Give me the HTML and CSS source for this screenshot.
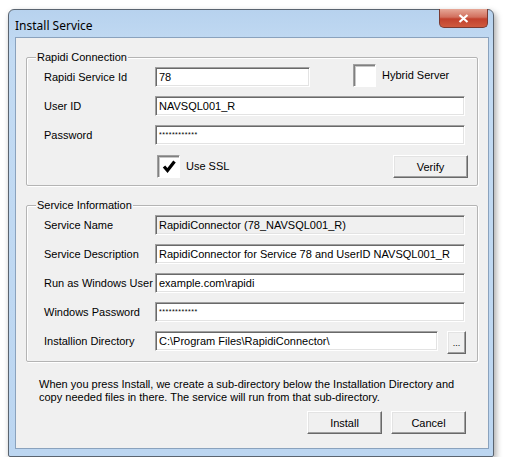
FILE: index.html
```html
<!DOCTYPE html>
<html lang="en">
<head>
  <meta charset="UTF-8">
  <title>Install Service</title>
  <link rel="stylesheet" href="styles.css">
</head>
<body>
  <div class="window">
    <div class="titlebar">
      <span class="title">Install Service</span>
      <div class="close">
        <svg width="11" height="9" viewBox="0 0 11 9"><path d="M1.5 1 L9.5 8 M9.5 1 L1.5 8" stroke="#fff" stroke-width="2.2" fill="none"/></svg>
      </div>
    </div>

    <div class="client">
      <fieldset class="group">
        <legend>Rapidi Connection</legend>
        <div class="row first">
          <label class="lbl">Rapidi Service Id</label>
          <div class="field short">78</div>
          <div class="check hybrid"></div>
          <span class="check-label">Hybrid Server</span>
        </div>
        <div class="row">
          <label class="lbl">User ID</label>
          <div class="field">NAVSQL001_R</div>
        </div>
        <div class="row">
          <label class="lbl">Password</label>
          <div class="field pw">************</div>
        </div>
        <div class="row tall">
          <span class="lbl"></span>
          <div class="check ssl">
            <svg width="18" height="18" viewBox="0 0 18 18"><path d="M4 8.5 L7.5 12.5 L14.5 3.5" stroke="#000" stroke-width="3.2" fill="none"/></svg>
          </div>
          <span class="check-label">Use SSL</span>
          <button class="btn verify">Verify</button>
        </div>
      </fieldset>

      <fieldset class="group second">
        <legend>Service Information</legend>
        <div class="row top">
          <label class="lbl">Service Name</label>
          <div class="field readonly">RapidiConnector (78_NAVSQL001_R)</div>
        </div>
        <div class="row">
          <label class="lbl">Service Description</label>
          <div class="field">RapidiConnector for Service 78 and UserID NAVSQL001_R</div>
        </div>
        <div class="row">
          <label class="lbl">Run as Windows User</label>
          <div class="field">example.com\rapidi</div>
        </div>
        <div class="row">
          <label class="lbl">Windows Password</label>
          <div class="field pw">************</div>
        </div>
        <div class="row dir">
          <label class="lbl">Installion Directory</label>
          <div class="field dirfield">C:\Program Files\RapidiConnector\</div>
          <button class="btn browse">...</button>
        </div>
      </fieldset>

      <p class="note">When you press Install, we create a sub-directory below the Installation Directory and<br>copy needed files in there. The service will run from that sub-directory.</p>

      <div class="actions">
        <button class="btn">Install</button>
        <button class="btn">Cancel</button>
      </div>
    </div>
  </div>
</body>
</html>
```

FILE: styles.css
```css
body{
  margin: 0;
  padding: 9px 0 0 8px;
  background: #fff;
  font-family: "Liberation Sans", Arial, sans-serif;
  font-size: 11px;
  color: #000;
}

.window{
  width: 484px;
  height: 446px;
  border: 1px solid #5a6470;
  border-radius: 6px 6px 2px 2px;
  background: linear-gradient(#b7d2ee, #c3dbf3 40px, #bcd6f1);
  box-shadow: 2px 3px 6px rgba(0, 0, 0, 0.35);
  display: flex;
  flex-direction: column;
}

.titlebar{
  height: 27px;
  display: flex;
  justify-content: space-between;
  align-items: flex-start;
}
.title{
  font-family: "Noto Sans", sans-serif;
  font-size: 12px;
  margin: 7px 0 0 6px;
  color: #000;
}
.close{
  width: 49px;
  height: 19px;
  margin: -1px 5px 0 0;
  border: 1px solid #7a3a32;
  border-top: none;
  border-radius: 0 0 5px 5px;
  box-sizing: border-box;
  background: linear-gradient(#e6a898, #d2705e 45%, #c2412d 55%, #cf5a3e);
  display: flex;
  align-items: center;
  justify-content: center;
}

.client{
  margin: 0 4px 0 6px;
  border: 1px solid #8aa2bd;
  background: #f0f0f0;
  height: 410px;
  display: flex;
  flex-direction: column;
}

.group{
  margin: 13px 10px 0 10px;
  padding: 0 10px 7px 17px;
  border: 1px solid #b4b4b4;
  border-radius: 2px;
  box-shadow: 1px 1px 0 #fff, inset 1px 1px 0 #fff;
}
.group.second{
  margin-top: 13px;
  padding-top: 3px;
  padding-bottom: 7px;
}
.group legend{
  padding: 0 1px;
  margin-left: -8px;
  line-height: 13px;
  background: #f0f0f0;
}

.row{
  display: flex;
  align-items: center;
  height: 20px;
  margin-top: 9px;
}
.row.first,
.row.top{
  margin-top: 0;
}
.row.first{
  height: 23px;
  align-items: flex-end;
}
.row.tall{
  height: 23px;
  margin-top: 10px;
}
.row.dir{
  height: 23px;
  align-items: flex-start;
  margin-top: 9px;
}

.lbl{
  width: 111px;
  line-height: 20px;
  flex-shrink: 0;
}

.field{
  width: 310px;
  height: 20px;
  box-sizing: border-box;
  background: #fff;
  border-style: solid;
  border-width: 1px;
  border-color: #a0a0a0 #fff #fff #a0a0a0;
  box-shadow: inset 1px 1px 0 #696969, inset -1px -1px 0 #e3e3e3;
  padding: 0 3px;
  line-height: 18px;
  white-space: nowrap;
  overflow: hidden;
}
.field.short{
  width: 155px;
}
.field.readonly{
  background: #f0f0f0;
}
.field.pw{
  font-size: 7px;
  letter-spacing: 0.5px;
}
.field.dirfield{
  width: 283px;
}

.check{
  width: 23px;
  height: 23px;
  box-sizing: border-box;
  background: #fff;
  border-style: solid;
  border-width: 1px;
  border-color: #a0a0a0 #fff #fff #a0a0a0;
  box-shadow: inset 1px 1px 0 #808080, inset 2px 2px 0 #c8c8c8;
  display: flex;
  align-items: center;
  justify-content: center;
}
.check.hybrid{
  margin-left: 43px;
}
.check.ssl{
  margin-left: 2px;
}
.check-label{
  margin-left: 6px;
  line-height: 23px;
}

.btn{
  font-family: "Liberation Sans", Arial, sans-serif;
  font-size: 11px;
  color: #000;
  width: 75px;
  height: 23px;
  padding: 0;
  background: #f0f0f0;
  border-style: solid;
  border-width: 1px;
  border-color: #fff #696969 #696969 #fff;
  box-shadow: inset -1px -1px 0 #a0a0a0, inset 1px 1px 0 #e3e3e3;
}
.btn.verify{
  margin-left: auto;
  margin-right: -1px;
}
.btn.browse{
  width: 19px;
  height: 23px;
  margin-left: 9px;
  font-size: 9px;
  line-height: 23px;
}

.note{
  margin: 16px 0 0 23px;
  line-height: 13px;
}

.actions{
  display: flex;
  justify-content: flex-end;
  gap: 9px;
  margin: 7px 22px 0 0;
}
```
